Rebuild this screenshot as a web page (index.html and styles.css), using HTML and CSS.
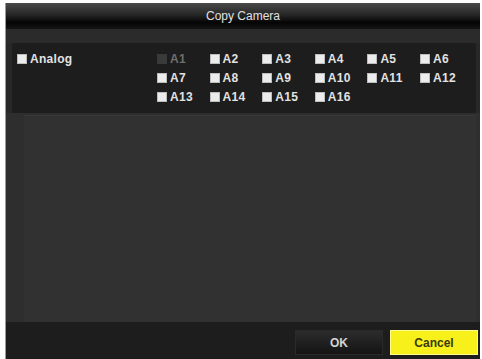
FILE: index.html
```html
<!DOCTYPE html>
<html lang="en">
<head>
  <meta charset="UTF-8" />
  <title>Copy Camera</title>
  <link rel="stylesheet" href="styles.css">
</head>
<body>

  <div class="dialog">
    <div class="title">Copy Camera</div>
    <div class="strip"></div>

    <!-- Channel selection -->
    <div class="panel">
      <label class="check group"><span class="box"></span>Analog</label>
      <div class="channels">
        <label class="check off"><span class="box"></span>A1</label>
        <label class="check"><span class="box"></span>A2</label>
        <label class="check"><span class="box"></span>A3</label>
        <label class="check"><span class="box"></span>A4</label>
        <label class="check"><span class="box"></span>A5</label>
        <label class="check"><span class="box"></span>A6</label>
        <label class="check"><span class="box"></span>A7</label>
        <label class="check"><span class="box"></span>A8</label>
        <label class="check"><span class="box"></span>A9</label>
        <label class="check"><span class="box"></span>A10</label>
        <label class="check"><span class="box"></span>A11</label>
        <label class="check"><span class="box"></span>A12</label>
        <label class="check"><span class="box"></span>A13</label>
        <label class="check"><span class="box"></span>A14</label>
        <label class="check"><span class="box"></span>A15</label>
        <label class="check"><span class="box"></span>A16</label>
      </div>
    </div>

    <div class="content">
      <div class="inner"></div>
    </div>

    <div class="footer">
      <button class="btn">OK</button>
      <button class="btn primary">Cancel</button>
    </div>
  </div>

</body>
</html>
```

FILE: styles.css
```css
/* -- Base -- */
* { box-sizing: border-box; margin: 0; padding: 0; }
body {
  font-family: 'Liberation Sans', Arial, sans-serif;
  background: #fff;
  width: 482px;
  height: 359px;
  overflow: hidden;
}

/* -- Dialog frame -- */
.dialog {
  margin: 3px 0 0 5px;
  width: 475px;
  height: 356px;
  background: #282828;
  border-left: 1px solid #9a9a9a;
  display: flex;
  flex-direction: column;
}
.title {
  height: 26px;
  background: linear-gradient(#4a4a4a 0%, #262626 45%, #050505 75%, #151515 100%);
  color: #e0e0e0;
  font-size: 12px;
  text-align: center;
  line-height: 26px;
}
.strip {
  height: 14px;
  background: #2b2b2b;
}

/* -- Channel panel -- */
.panel {
  margin: 0 4px 0 6px;
  height: 70px;
  background: #1d1d1d;
  padding: 6px 0 6px 5px;
  display: flex;
  align-items: flex-start;
}
.check {
  display: flex;
  align-items: center;
  height: 19px;
  color: #e2e2e2;
  font-size: 12px;
  font-weight: bold;
  letter-spacing: 0.3px;
}
.box {
  width: 10px;
  height: 10px;
  background: #ececec;
  border: 1px solid #bdbdbd;
  margin-right: 3px;
}
.group { width: 140px; }
.off { color: #6e6e6e; }
.off .box { background: #3a3a3a; border-color: #3a3a3a; }
.channels {
  display: grid;
  grid-template-columns: repeat(6, 52.6px);
}

/* -- Empty content area -- */
.content {
  flex: 1;
  background: #2e2e2e;
  padding: 2px 4px 0 18px;
  display: flex;
}
.inner {
  flex: 1;
  background: #313131;
  border-top: 1px solid #383838;
}

/* -- Footer buttons -- */
.footer {
  height: 37px;
  background: #1d1d1d;
  display: flex;
  justify-content: flex-end;
  align-items: flex-start;
  gap: 7px;
  padding: 8px 2px 0 0;
}
.btn {
  width: 88px;
  height: 25px;
  border: 1px solid #2a2a2a;
  background: linear-gradient(#2c2c2c, #141414);
  color: #d4d4d4;
  font-family: 'Liberation Sans', Arial, sans-serif;
  font-size: 12px;
  font-weight: bold;
}
.primary {
  background: #f7f01a;
  border: 1px solid #fffb8a;
  color: #3a3a10;
}
```
